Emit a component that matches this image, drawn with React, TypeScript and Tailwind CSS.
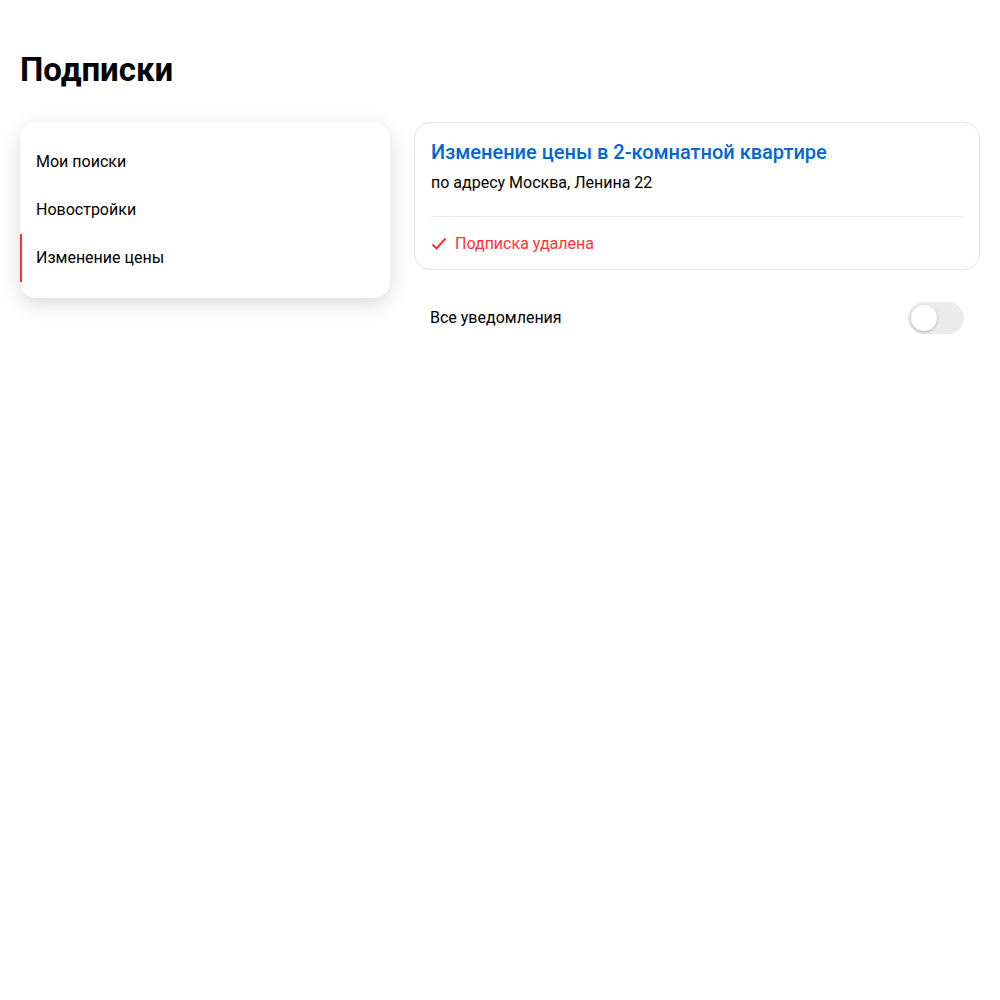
const menu = ["Мои поиски", "Новостройки", "Изменение цены"];

export default function App() {
  return (
    <div className="min-h-screen bg-white px-5 pt-[50px] text-black [font-family:Roboto,sans-serif]">
      <h1 className="text-[33px] font-bold leading-[40px]">Подписки</h1>

      <div className="mt-[32px] flex items-start gap-6">
        {/* Sidebar */}
        <div className="w-[370px] shrink-0 rounded-2xl bg-white py-4 shadow-[0_6px_20px_rgba(0,0,0,0.15)]">
          {menu.map((item, i) => (
            <div
              key={item}
              className={
                i === 2
                  ? "flex h-12 items-center border-l-2 border-[#ff3333] pl-[14px] text-base"
                  : "flex h-12 items-center pl-4 text-base"
              }
            >
              {item}
            </div>
          ))}
        </div>

        {/* Content */}
        <div className="flex-1">
          <div className="rounded-2xl border border-[#e6e6e6] px-4 pt-[15px] pb-[13px]">
            <div className="text-[20px] font-medium leading-[28px] text-[#0067d6]">
              Изменение цены в 2-комнатной квартире
            </div>
            <div className="mt-[5px] text-base leading-6">по адресу Москва, Ленина 22</div>
            <div className="mt-[21px] h-px bg-[#ebebeb]" />
            <div className="mt-[15px] flex items-center gap-2 text-base leading-6 text-[#ff3333]">
              <svg width="16" height="16" viewBox="0 0 16 16" fill="none">
                <path d="M1.5 8.5 L5.5 12.5 L14.5 2.5" stroke="#ff3333" strokeWidth="2" />
              </svg>
              Подписка удалена
            </div>
          </div>

          <div className="mt-8 flex items-center justify-between pl-4 pr-[16px]">
            <span className="text-base leading-6">Все уведомления</span>
            <div className="flex h-8 w-14 items-center rounded-full bg-[#ebebeb] px-[3px]">
              <div className="h-[26px] w-[26px] rounded-full bg-white shadow-[0_1px_3px_rgba(0,0,0,0.25)]" />
            </div>
          </div>
        </div>
      </div>
    </div>
  );
}
